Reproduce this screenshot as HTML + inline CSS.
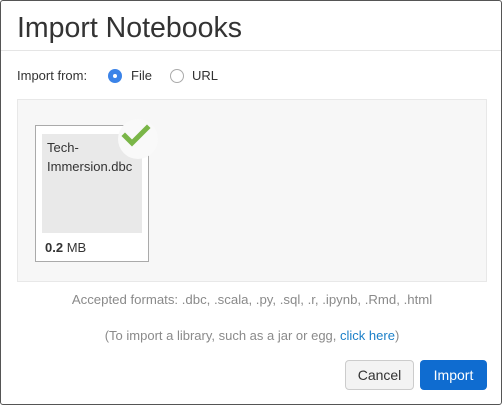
<!DOCTYPE html>
<html><head><style>
body{margin:0;width:504px;height:407px;background:#fff;font-family:"Liberation Sans",sans-serif;position:relative;overflow:hidden}
.frame{position:absolute;left:0;top:0;width:502px;height:405px;border:1px solid #555;border-radius:3px;box-sizing:border-box}
.abs{position:absolute}
</style></head><body>
<div class="frame"></div>
<div class="abs" style="left:17px;top:12px;font-size:28.5px;color:#333;font-weight:300">Import Notebooks</div>
<div class="abs" style="left:1px;top:50px;width:500px;height:1px;background:#e5e5e5"></div>
<div class="abs" style="left:17px;top:68px;font-size:13px;color:#333">Import from:</div>
<div class="abs" style="left:108px;top:69px;width:14px;height:14px;border-radius:50%;background:#3b83e8"></div>
<div class="abs" style="left:113px;top:74px;width:4px;height:4px;border-radius:50%;background:#fff"></div>
<div class="abs" style="left:131px;top:68px;font-size:13px;color:#333">File</div>
<div class="abs" style="left:170px;top:69px;width:12px;height:12px;border-radius:50%;border:1px solid #aaa"></div>
<div class="abs" style="left:192px;top:68px;font-size:13px;color:#333">URL</div>
<div class="abs" style="left:17px;top:99px;width:470px;height:183px;background:#f7f7f7;border:1px solid #e8e8e8;box-sizing:border-box"></div>
<div class="abs" style="left:35px;top:125px;width:114px;height:137px;background:#fff;border:1px solid #aaa;box-sizing:border-box"></div>
<div class="abs" style="left:42px;top:134px;width:100px;height:99px;background:#e9e9e9"></div>
<div class="abs" style="left:47px;top:138px;font-size:13px;line-height:19px;color:#333">Tech-<br>Immersion.dbc</div>
<div class="abs" style="left:45px;top:240px;font-size:13px;color:#333"><b>0.2</b> MB</div>
<div class="abs" style="left:118px;top:119px;width:40px;height:40px;border-radius:50%;background:#f9f9f9"></div>
<svg class="abs" style="left:118px;top:119px" width="40" height="40"><path d="M7 13 L14 20 L29 5" fill="none" stroke="#7ab648" stroke-width="5" stroke-linecap="square" transform="translate(0,4)"/></svg>
<div class="abs" style="left:0;width:504px;top:292px;text-align:center;font-size:13.2px;color:#8a8a8a">Accepted formats: .dbc, .scala, .py, .sql, .r, .ipynb, .Rmd, .html</div>
<div class="abs" style="left:0;width:504px;top:328px;text-align:center;font-size:13px;color:#8a8a8a">(To import a library, such as a jar or egg, <span style="color:#1a7fc8">click here</span>)</div>
<div class="abs" style="left:345px;top:360px;width:69px;height:30px;background:#f3f3f3;border:1px solid #ccc;border-radius:4px;box-sizing:border-box;text-align:center;line-height:28px;font-size:14px;color:#333">Cancel</div>
<div class="abs" style="left:420px;top:360px;width:67px;height:30px;background:#0f6cd0;border-radius:4px;text-align:center;line-height:30px;font-size:14px;color:#fff">Import</div>
</body></html>
